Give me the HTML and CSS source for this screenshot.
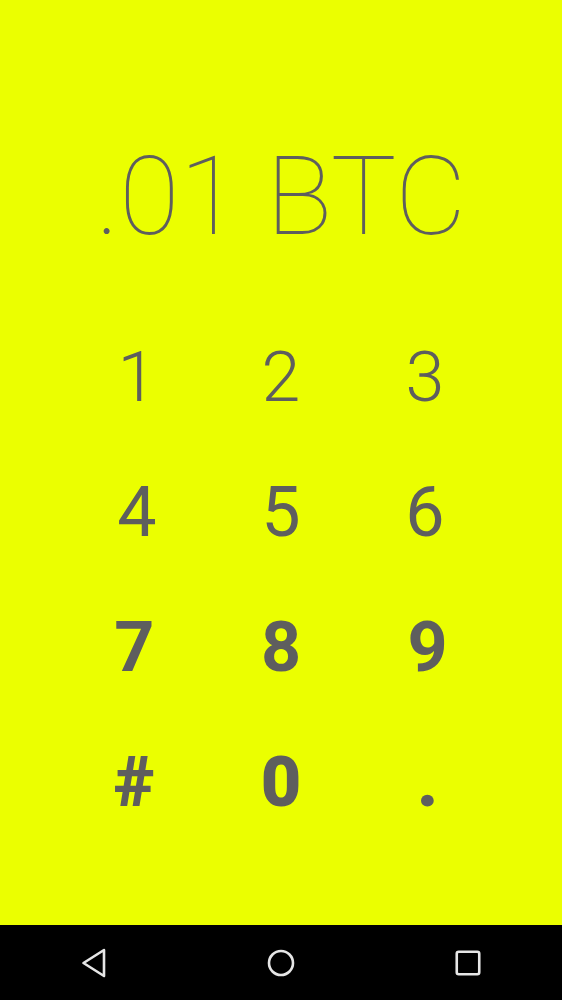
FILE: index.html
```html
<!DOCTYPE html>
<html>
<head>
<meta charset="utf-8">
<link rel="stylesheet" href="styles.css">
</head>
<body>
<div class="screen">
  <main class="app">
    <div class="amount">.01 BTC</div>
    <div class="keypad">
      <div class="key-row w-light">
        <div class="key">1</div>
        <div class="key">2</div>
        <div class="key">3</div>
      </div>
      <div class="key-row w-regular">
        <div class="key">4</div>
        <div class="key">5</div>
        <div class="key">6</div>
      </div>
      <div class="key-row key-row-wide w-bold">
        <div class="key">7</div>
        <div class="key">8</div>
        <div class="key">9</div>
      </div>
      <div class="key-row key-row-wide w-black">
        <div class="key">#</div>
        <div class="key">0</div>
        <div class="key">.</div>
      </div>
    </div>
  </main>
  <nav class="navbar">
    <div class="nav-btn">
      <svg class="nav-icon" viewBox="0 0 30 30" width="30" height="30"><path d="M25 2 L4.5 15 L25 28 Z"/></svg>
    </div>
    <div class="nav-btn">
      <svg class="nav-icon" viewBox="0 0 30 30" width="30" height="30"><circle cx="15" cy="15" r="12"/></svg>
    </div>
    <div class="nav-btn">
      <svg class="nav-icon" viewBox="0 0 30 30" width="30" height="30"><rect x="3.75" y="3.75" width="22.5" height="22.5" rx="2"/></svg>
    </div>
  </nav>
</div>
</body>
</html>
```

FILE: styles.css
```css
html, body {
  margin: 0;
  padding: 0;
  background: #ebff00;
}
.screen {
  width: 562px;
  height: 1000px;
  display: flex;
  flex-direction: column;
  font-family: Roboto, "Liberation Sans", sans-serif;
  color: #5e5e5e;
}
.app {
  flex: 1;
  display: flex;
  flex-direction: column;
  align-items: center;
  padding-top: 142px;
}
.amount {
  font-size: 110px;
  font-weight: 100;
  line-height: 110px;
  height: 110px;
  white-space: nowrap;
}
.keypad {
  margin-top: 58px;
  display: flex;
  flex-direction: column;
  align-items: center;
}
.key-row {
  width: 432px;
  height: 135px;
  display: grid;
  grid-template-columns: repeat(3, 1fr);
}
.key-row-wide {
  width: 440px;
}
.key {
  font-size: 70px;
  line-height: 135px;
  text-align: center;
}
.w-light { font-weight: 300; }
.w-regular { font-weight: 400; }
.w-bold { font-weight: 700; }
.w-black { font-weight: 900; }
.navbar {
  height: 75px;
  background: #000;
  display: grid;
  grid-template-columns: repeat(3, 1fr);
}
.nav-btn {
  display: flex;
  align-items: center;
  justify-content: center;
}
.nav-icon {
  fill: none;
  stroke: #e6e6e6;
  stroke-width: 2.6;
  stroke-linejoin: round;
}
```
